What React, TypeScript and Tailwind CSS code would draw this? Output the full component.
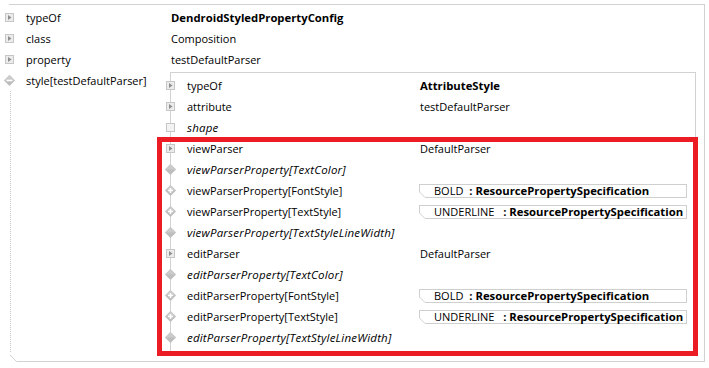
import React from "react";

type Kind = "arrow" | "box" | "diamond" | "plus" | "minus";

type Row = {
  kind: Kind;
  label: string;
  italic?: boolean;
  value?: string;
  bold?: boolean;
  spec?: string;
};

const Icon = ({ kind }: { kind: Kind }) => {
  if (kind === "arrow") {
    return (
      <svg width="9" height="9" viewBox="0 0 9 9" className="-ml-[5px] shrink-0">
        <rect x="0.5" y="0.5" width="8" height="8" fill="#ececec" stroke="#c6c6c6" />
        <path d="M3 2 L6.5 4.5 L3 7 Z" fill="#8e8e8e" />
      </svg>
    );
  }
  if (kind === "box") {
    return (
      <svg width="9" height="9" viewBox="0 0 9 9" className="-ml-[5px] shrink-0">
        <rect x="0.5" y="0.5" width="8" height="8" fill="#f3f3f3" stroke="#c6c6c6" />
      </svg>
    );
  }
  return (
    <svg width="11" height="11" viewBox="0 0 11 11" className="-ml-[6px] shrink-0">
      <path d="M5.5 0 L11 5.5 L5.5 11 L0 5.5 Z" fill="#bdbdbd" />
      <path d="M5.5 0 L11 5.5 L0 5.5 Z" fill="#cbcbcb" />
      {kind === "plus" && <path d="M3 5.5 H8 M5.5 3 V8" stroke="#fff" strokeWidth="1.6" />}
      {kind === "minus" && <path d="M2.5 5.5 H8.5" stroke="#fff" strokeWidth="1.6" />}
    </svg>
  );
};

const SpecBox = ({ name }: { name: string }) => (
  <div className="-ml-[1px] flex h-[14px] w-[268px] border-t border-r border-[#cfcfcf]">
    <svg width="7" height="13" viewBox="0 0 7 13" className="shrink-0">
      <path d="M0.5 0 V7 L6 12.5 H7" fill="none" stroke="#cfcfcf" />
    </svg>
    <div className="flex-1 border-b border-[#cfcfcf] pl-[8px] text-[11px] leading-[12px] whitespace-pre">
      {name}
      <span className="ml-[3px] text-[11.3px] font-bold"> : ResourcePropertySpecification</span>
    </div>
  </div>
);

const outer: Row[] = [
  { kind: "arrow", label: "typeOf", value: "DendroidStyledPropertyConfig", bold: true },
  { kind: "arrow", label: "class", value: "Composition" },
  { kind: "arrow", label: "property", value: "testDefaultParser" },
];

const inner: Row[] = [
  { kind: "arrow", label: "typeOf", value: "AttributeStyle", bold: true },
  { kind: "arrow", label: "attribute", value: "testDefaultParser" },
  { kind: "box", label: "shape", italic: true },
  { kind: "arrow", label: "viewParser", value: "DefaultParser" },
  { kind: "diamond", label: "viewParserProperty[TextColor]", italic: true },
  { kind: "plus", label: "viewParserProperty[FontStyle]", spec: "BOLD" },
  { kind: "plus", label: "viewParserProperty[TextStyle]", spec: "UNDERLINE " },
  { kind: "diamond", label: "viewParserProperty[TextStyleLineWidth]", italic: true },
  { kind: "arrow", label: "editParser", value: "DefaultParser" },
  { kind: "diamond", label: "editParserProperty[TextColor]", italic: true },
  { kind: "plus", label: "editParserProperty[FontStyle]", spec: "BOLD" },
  { kind: "plus", label: "editParserProperty[TextStyle]", spec: "UNDERLINE " },
  { kind: "diamond", label: "editParserProperty[TextStyleLineWidth]", italic: true },
];

export default function App() {
  return (
    <div
      className="relative h-[368px] w-[709px] bg-white pl-[9px] pt-[4px] text-[11px] text-black"
      style={{ fontFamily: '"Segoe UI", "Open Sans", "Noto Sans", sans-serif' }}
    >
      <div className="flex w-[696px] flex-col border-t border-r border-[#d2d2d2] pt-[2px]">
        {outer.map((r) => (
          <div key={r.label} className="flex h-[21px] items-center">
            <div className="flex w-[17px] items-center pl-[1px]">
              <Icon kind={r.kind} />
            </div>
            <div className="w-[144px] leading-[21px]">{r.label}</div>
            <div className={`pl-[1px] leading-[21px] ${r.bold ? "text-[11.3px] font-bold" : ""}`}>{r.value}</div>
          </div>
        ))}

        {/* style row with the nested attribute */}
        <div className="flex pb-[3px]">
          <div className="flex w-[17px] flex-col">
            <div className="flex h-[21px] items-center pl-[1px]">
              <Icon kind="minus" />
            </div>
            <div className="ml-[1px] flex-1 border-l border-dotted border-[#c8c8c8]" />
          </div>
          <div className="w-[144px] leading-[21px]">style[testDefaultParser]</div>
          <div className="flex-1">
            <div className="mt-[2px] mr-[8px] border border-[#d2d2d2] pt-[2px] pb-[3px]">
              {inner.map((r) => (
                <div key={r.label} className="flex h-[21px] items-center">
                  <div className="flex w-[16px] items-center">
                    <Icon kind={r.kind} />
                  </div>
                  <div
                    className={`w-[233px] leading-[21px] whitespace-nowrap ${
                      r.italic ? "text-[11.5px] tracking-[0.2px] italic" : ""
                    }`}
                  >
                    {r.label}
                  </div>
                  {r.spec ? (
                    <SpecBox name={r.spec} />
                  ) : (
                    <div className={`leading-[21px] ${r.bold ? "text-[11.3px] font-bold" : ""}`}>{r.value}</div>
                  )}
                </div>
              ))}
            </div>
          </div>
        </div>

        <div className="flex h-[7px]">
          <svg width="8" height="7" viewBox="0 0 8 7" className="shrink-0">
            <path d="M1 0 L7.5 6.5 H8" fill="none" stroke="#d2d2d2" />
          </svg>
          <div className="flex-1 border-b border-[#d2d2d2]" />
        </div>
      </div>

      {/* highlight annotation */}
      <div className="pointer-events-none absolute top-[137px] left-[157px] h-[219px] w-[541px] border-[5px] border-[#ec1c24]" />
    </div>
  );
}
